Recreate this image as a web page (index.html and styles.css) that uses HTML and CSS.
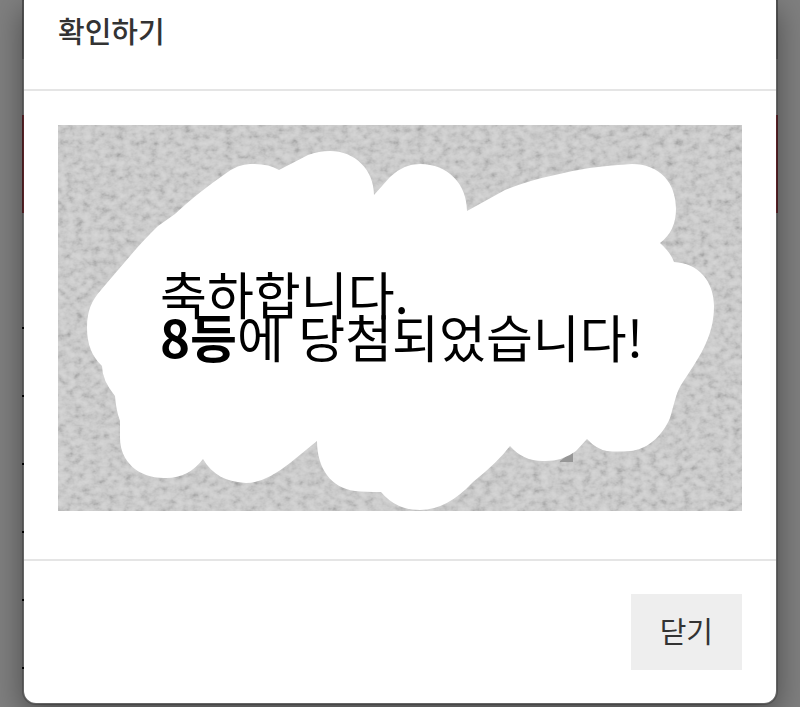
FILE: index.html
```html
<!DOCTYPE html>
<html lang="ko">
<head>
<meta charset="utf-8">
<meta name="viewport" content="width=device-width, initial-scale=1">
<title>확인하기</title>
<link rel="stylesheet" href="styles.css">
</head>
<body>
<div class="stage">
  <div class="page" aria-hidden="true">
    <div class="page-top"></div>
    <div class="page-banner"></div>
    <div class="page-list">
      <i></i><i></i><i></i><i></i><i></i><i></i>
    </div>
  </div>
  <section class="modal" role="dialog" aria-labelledby="modal-title">
    <header class="modal-header">
      <h1 class="modal-title" id="modal-title">확인하기</h1>
    </header>
    <div class="modal-body">
      <div class="scratch">
        <svg class="scratch-art" viewBox="58 125 684 386" aria-hidden="true">
          <defs>
            <filter id="grain" x="0" y="0" width="1" height="1" color-interpolation-filters="sRGB">
              <feTurbulence type="fractalNoise" baseFrequency="0.12 0.15" numOctaves="3" seed="8"/>
              <feColorMatrix values="1 0 0 0 0  1 0 0 0 0  1 0 0 0 0  0 0 0 0 1"/>
              <feComponentTransfer>
                <feFuncR type="table" tableValues="0.6 0.66 0.72 0.765 0.795 0.815 0.83 0.84 0.85"/>
                <feFuncG type="table" tableValues="0.6 0.66 0.72 0.765 0.795 0.815 0.83 0.84 0.85"/>
                <feFuncB type="table" tableValues="0.6 0.66 0.72 0.765 0.795 0.815 0.83 0.84 0.85"/>
              </feComponentTransfer>
            </filter>
          </defs>
          <rect x="58" y="125" width="684" height="386" fill="#c9c9c9" filter="url(#grain)"/>
          <path fill="#969696" d="M560 461L573 451V462H560Z"/>
          <path fill="#fff" d="M87 328C87 310 92 300 101 290C120 268 140 243 158 226L175 214C192 198 208 186 225 174Q238 164 250 164Q268 163 279 170L308 155Q319 151 330 151C355 151 374 170 374 195L390 177Q403 164 420 164C448 164 467 184 467 211L505 190Q530 180 555 175Q590 166 632 164C660 164 676 183 676 209Q676 231 660 243Q671 253 674 262C698 263 714 281 714 306C714 338 698 359 681 385C676 393 674 405 670 418C662 437 646 450 630 451Q618 452 607 451Q596 449 587 439L576 451Q563 461 545 461Q524 462 510 446Q498 462 473 482Q447 510 420 510Q396 510 381 492Q365 492 355 491C331 488 317 468 317 441L290 463Q265 483 246 483C227 482 212 475 203 459Q188 479 164 478C138 478 120 461 120 438V421Q116 410 115 396Q102 380 102 366Q87 352 87 328Z"/>
        </svg>
        <div class="message">
          <p class="message-line">축하합니다.</p>
          <p class="message-line"><strong>8등</strong>에 당첨되었습니다!</p>
        </div>
      </div>
    </div>
    <footer class="modal-footer">
      <button class="close-button" type="button">닫기</button>
    </footer>
  </section>
</div>
</body>
</html>
```
FILE: styles.css
```css
* {
  box-sizing: border-box;
}

body {
  margin: 0;
  background: #7f7f7f;
  color: #333;
  font-family: "Noto Sans CJK KR", sans-serif;
}

.stage {
  display: grid;
  min-height: 100vh;
  overflow: hidden;
}

.page,
.modal {
  grid-area: 1 / 1;
  margin: 0 22px;
}

.page-top {
  height: 59px;
  background: #666;
}

.page-banner {
  height: 98px;
  margin-top: 56px;
  background: #6c2a30;
}

.page-list {
  display: flex;
  flex-direction: column;
  gap: 66px;
  padding-top: 114px;
}

.page-list i {
  width: 4px;
  height: 2px;
  background: #000;
}

.modal {
  position: relative;
  align-self: start;
  border: 2px solid rgba(0, 0, 0, 0.2);
  border-top: 0;
  border-radius: 0 0 14px 14px;
  background: #fff;
  background-clip: padding-box;
  box-shadow: 0 10px 30px rgba(0, 0, 0, 0.4);
}

.modal-header {
  padding: 10px 34px 39px;
  border-bottom: 2px solid #e5e5e5;
}

.modal-title {
  margin: 0;
  font-size: 29px;
  font-weight: 500;
  line-height: 40px;
}

.modal-body {
  padding: 34px 34px 48px;
}

.scratch {
  display: grid;
}

.scratch-art,
.message {
  grid-area: 1 / 1;
}

.scratch-art {
  display: block;
  width: 100%;
}

.message {
  position: relative;
  align-self: center;
  justify-self: start;
  margin-left: 102px;
  padding-bottom: 6px;
  color: #000;
  font-size: 51px;
  line-height: 43px;
}

.message-line {
  margin: 0;
  white-space: nowrap;
}

.modal-footer {
  display: flex;
  justify-content: flex-end;
  padding: 33px 34px;
  border-top: 2px solid #e5e5e5;
}

.close-button {
  padding: 16px 29px 20px;
  border: 0;
  background: #eee;
  color: #333;
  font: inherit;
  font-size: 29px;
  line-height: 40px;
}
```
